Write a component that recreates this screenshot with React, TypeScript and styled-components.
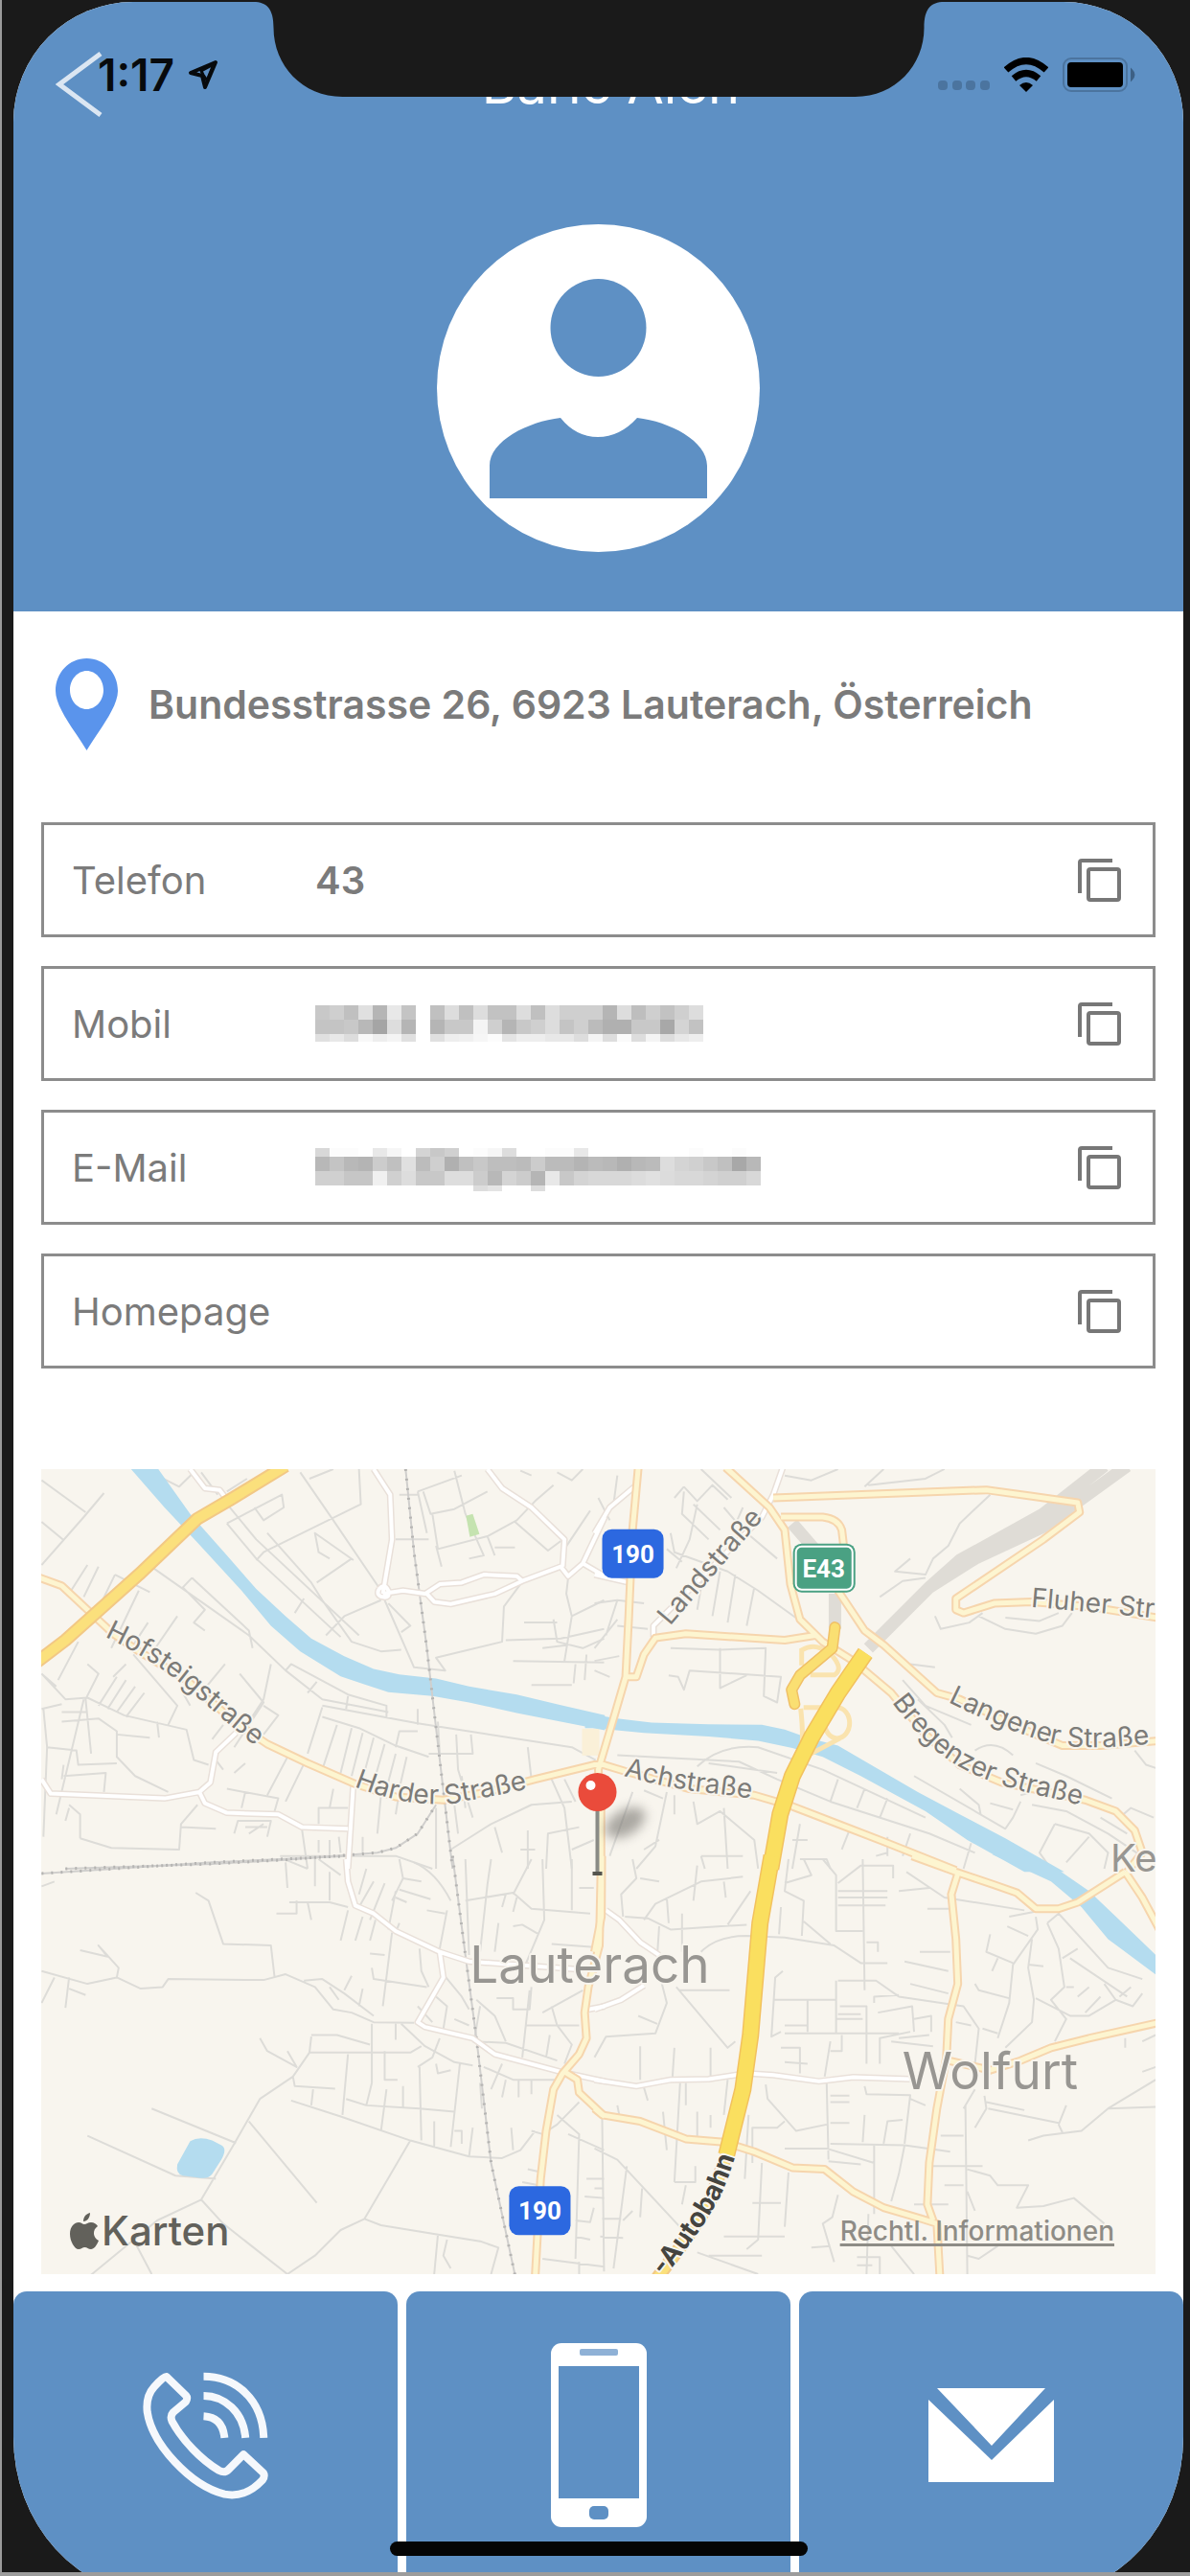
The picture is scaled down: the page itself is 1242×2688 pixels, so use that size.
import React from "react";
import styled, { createGlobalStyle } from "styled-components";

const blue = "#5e90c4";
const black = "#1a1a1a";
const grey = "#7b7b7b";
const uiFont = `Inter, Roboto, "Liberation Sans", sans-serif`;

const GlobalStyle = createGlobalStyle`
  *, *::before, *::after { box-sizing: border-box; }
  body { margin: 0; background: ${black}; font-family: ${uiFont}; }
  button, input { font: inherit; color: inherit; }
`;

const Device = styled.div`
  min-height: 100vh;
  overflow: hidden;
  padding: 2px 7px 0 12px;
  background: ${black};
  border-left: 2px solid #9a9a9a;
  border-bottom: 4px solid #9c9c9c;
`;

const Screen = styled.div`
  position: relative;
  display: flex;
  flex-direction: column;
  margin-bottom: -24px;
  overflow: hidden;
  background: #fff;
  border-radius: 125px 125px 150px 150px / 125px 125px 165px 165px;
`;

const Notch = styled.svg`
  position: absolute;
  top: 0;
  left: 50%;
  z-index: 2;
  transform: translateX(-50%);
`;

const StatusBar = styled.div`
  position: absolute;
  inset: 0 0 auto 0;
  z-index: 3;
  display: flex;
  align-items: center;
  justify-content: space-between;
  height: 152px;
  padding: 0 49px 0 88px;
  pointer-events: none;
`;

const StatusGroup = styled.div`
  display: flex;
  align-items: center;
  gap: 14px;
`;

const Time = styled.time`
  font-size: 46px;
  font-weight: 600;
  color: #070a0d;
`;

const Header = styled.header`
  display: flex;
  flex-direction: column;
  align-items: center;
  padding-bottom: 62px;
  background: ${blue};
`;

const NavBar = styled.div`
  display: grid;
  grid-template-columns: 1fr auto 1fr;
  align-items: center;
  align-self: stretch;
  height: 172px;
  padding: 0 44px;
  margin-bottom: 60px;
`;

const PlainButton = styled.button`
  display: flex;
  justify-self: start;
  padding: 0;
  background: none;
  border: 0;
  cursor: pointer;
`;

const Title = styled.h1`
  margin: 0;
  padding-left: 26px;
  font-size: 56px;
  font-weight: 400;
  color: #fff;
`;

const Content = styled.main`
  display: flex;
  flex-direction: column;
  padding: 49px 29px 18px;
`;

const Address = styled.address`
  display: flex;
  align-items: center;
  gap: 32px;
  padding-left: 15px;
  font-size: 41px;
  font-style: normal;
  font-weight: 600;
  color: ${grey};
  white-space: nowrap;
`;

const Fields = styled.div`
  display: grid;
  gap: 30px;
  margin: 75px 0 105px;
`;

const FieldBox = styled.div`
  display: grid;
  grid-template-columns: 254px 1fr auto;
  align-items: center;
  height: 120px;
  padding: 0 33px 0 29px;
  border: 3px solid #8c8c8c;
  font-size: 40px;
  color: ${grey};
`;

const ValueInput = styled.input`
  width: 100%;
  padding: 0;
  background: none;
  border: 0;
  outline: 0;
  font-weight: 600;
`;

const MapPanel = styled.section`
  position: relative;
  height: 840px;
  overflow: hidden;
  background: #f8f5ee;
`;

const MapDrawing = styled.svg`
  display: block;
  width: 100%;
  height: 100%;
`;

const MapFooter = styled.div`
  position: absolute;
  inset: auto 43px 20px 30px;
  display: flex;
  align-items: center;
  justify-content: space-between;
`;

const MapBrand = styled.span`
  display: flex;
  align-items: center;
  gap: 3px;
  font-size: 42px;
  font-weight: 500;
  color: #62615b;
`;

const LegalLink = styled.a`
  font-size: 28px;
  font-weight: 500;
  color: #8e8c86;
  text-decoration: underline;
  text-decoration-thickness: 3px;
  text-decoration-skip-ink: none;
  text-underline-offset: 3px;
`;

const Actions = styled.nav`
  display: grid;
  grid-template-columns: repeat(3, 1fr);
  gap: 9px;
`;

const ActionButton = styled.button`
  display: flex;
  align-items: center;
  justify-content: center;
  height: 317px;
  padding: 0 0 17px;
  background: ${blue};
  border: 0;
  border-radius: 14px 14px 0 0;
  cursor: pointer;
`;

const HomeIndicator = styled.div`
  position: absolute;
  bottom: 41px;
  left: 50%;
  width: 436px;
  height: 15px;
  background: #050505;
  border-radius: 8px;
  transform: translateX(-50%);
`;

/* ---------- pixelated values ---------- */

type Mosaic = { top: number; heights: number[]; rows: string[] };

const mobileMosaic: Mosaic = {
  top: 6,
  heights: [15, 15, 8],
  rows: [
    "c8cfc0e0b5e8c4ffc0ddc0ddc2c2ddc0ddcfcfcfb5ddbecfc2cfdd",
    "c4c4c8b8a5ddb5ffb5c8c8f4cfb5c8cfddc4cfbbb0b0c8c8a8d4c2",
    "e0e8ddf8eef4e0ffe0eef0f6fce4eeeee8e8ddf4ddfaddf4dde8ee",
  ],
};

const mailMosaic: Mosaic = {
  top: 5,
  heights: [9, 15, 15, 6],
  rows: [
    "d8fcfcffe8f6ffd4c8d0fffcf6ddfffffcfce8fffffffffffffffcfffffcff",
    "b8c4b8b4ccc0e0bccfb0c0c8bebebbccbbbbb4bbb8b0b8bbddd4d0c8c0a8b8",
    "d0d0c6c6f0d0ddc8c8ddddccb8d4ccb5e8c8d4d8d8d8dce0dcd8d8d4d0d0d8",
    "ffffffffffffffffffffffdde4ffffddffffffffffffffffffffffffffffff",
  ],
};

const cellWidth = 15;

function MosaicValue({ data, label }: { data: Mosaic; label: string }) {
  const columns = data.rows[0].length / 2;
  let y = data.top;
  return (
    <svg width={columns * cellWidth} height={50} role="img" aria-label={label} shapeRendering="crispEdges">
      {data.rows.map((row, r) => {
        const rowY = y;
        y += data.heights[r];
        return Array.from({ length: columns }, (_, c) => {
          const tone = row.slice(c * 2, c * 2 + 2);
          return tone === "ff" ? null : (
            <rect
              key={`${r}-${c}`}
              x={c * cellWidth}
              y={rowY}
              width={cellWidth}
              height={data.heights[r]}
              fill={`#${tone}${tone}${tone}`}
            />
          );
        });
      })}
    </svg>
  );
}

function CopyIcon() {
  return (
    <svg width="46" height="46" fill="none" stroke="#777" strokeWidth="4">
      <path d="M3 37V5a2 2 0 0 1 2-2h32" />
      <rect x="12" y="12" width="32" height="32" rx="2" />
    </svg>
  );
}

function Field({ id, label, value, mosaic }: { id: string; label: string; value?: string; mosaic?: Mosaic }) {
  return (
    <FieldBox>
      {mosaic ? <span>{label}</span> : <label htmlFor={id}>{label}</label>}
      {mosaic ? <MosaicValue data={mosaic} label={label} /> : <ValueInput id={id} readOnly value={value} />}
      <PlainButton type="button" aria-label={`${label} kopieren`}>
        <CopyIcon />
      </PlainButton>
    </FieldBox>
  );
}

/* ---------- map ---------- */

type Layer = "minor" | "rail" | "tunnel" | "water" | "white" | "local" | "ramp" | "major" | "motorway";
type Tile = { at: string } & Partial<Record<Layer, string>>;

const tiles: Tile[] = [
  {
    at: "translate(30 1520) scale(0.38265 0.33333)",
    water:
      "M350 35L440 180 540 310 620 415 700 500 770 570 860 625 940 665 1010 682 1110 695 1200 720 1330 745 1450 778 1570 810V857L1450 830 1330 803 1200 770 1100 750 980 738 920 715 850 688 740 610 660 530 580 420 460 270 370 160 275 35Z",
    major: "M20 645L100 575 300 370 460 195 550 135 700 30",
    local:
      "M30 380L90 405 160 480 230 555 300 610 430 700 560 830 650 900 760 960 890 1025 1000 1065 1130 1075 1250 1050 1380 1010 1540 965H1570",
    white:
      "M440 40L480 100 520 105 540 135M940 40L985 120 990 260 965 430 M965 430L1020 420 1080 430 1120 400 1180 395 1240 370 1330 375 1345 390 1270 430 1150 462 1105 455 1085 430M955 415q15 -20 25 5q5 25 -15 20q-20 -5 -10 -25M1345 390L1450 345 1470 375 1510 335 1570 190M1250 40L1290 100 1370 160 1460 260 1455 345M1510 335L1570 375M565 865L510 925 495 1020 465 1050 370 1070 60 1055 35 1010M465 1050L480 1085 540 1115 680 1120 745 1160 870 1165M885 1020L870 1290",
    rail: "M1027 40L1050 300 1085 600 1110 850 1155 1290M100 1290L500 1275 700 1262 950 1240 1000 1225 1060 1180 1110 1090",
    minor: `M35 75L155 175M205 115L150 190 35 340M35 205L95 262M350 60L410 95 450 50M470 50L515 120M530 135L620 260 900 560M595 70L540 110M740 50L830 200 960 420M765 70L830 40M900 40L905 150 640 300 620 325M540 210L690 120 695 160 640 200 615 160M540 210L620 320 850 565M880 320L785 395M885 325L780 240 790 300 820 320M960 450L860 500 810 560M970 450L1050 660 1135 670 1110 630 1290 580 1295 470 1340 400M980 460L1040 530 1015 550M650 240L770 395 800 450 880 580 960 610 1015 605M750 445L725 490M340 350L600 560 700 670 800 760 980 800M445 380L420 410 480 480 450 520 480 545M445 380L600 545 610 600M1060 110L1180 60M1075 110L1095 180 1160 165 1250 110M1160 45L1190 180 1240 310 1200 320M1100 180L1115 290 1250 250 1330 200 1380 140 1430 90M1010 120H1060M1000 260H1090M1060 110L1085 240M1325 205L1415 295 1450 265M1370 60L1340 45M1250 250L1270 310M1270 285H1325M1110 280L1125 345M1440 50L1480 75 1510 40M1530 170L1460 290M1470 380L1465 430 1480 500 1460 640M1480 500L1568 450M1300 575L1450 570 1568 540M1350 520H1440M1430 510L1440 580 1510 600 1568 570M1320 640L1568 645M1490 650L1485 710M1520 620L1515 700M1370 715H1480M1400 600L1470 590M75 720L35 680M75 1120L150 760 M135 580L80 700M300 420L225 600M160 340L110 430M190 345L150 440M235 370L330 425M235 370L180 500M325 520L285 590M405 500L345 600M265 650L230 690M285 620L405 780 380 840M35 680L100 760 160 755 260 810 430 855 450 950 490 965M160 650L190 680 155 760 170 930M190 780L240 690M215 790L265 700M240 800L290 720M265 815L315 740M90 800H160M90 830L190 820 240 860 240 940 290 1000 380 1050M240 870L330 880M35 790L90 775M40 790L50 910 40 1190M50 910L130 920 135 965 240 960M95 1000L210 990 205 1050M95 965L90 1010M350 830L355 880M535 650L470 740M575 680L640 770 560 910M660 650L640 760 600 830M640 780L680 810 640 870M440 780L420 740M530 840L500 885M700 670L715 650 870 745 975 780V820M785 705L760 740M870 750L865 790M800 785L760 930M800 780L1060 835 1480 910 1545 950M800 815L900 850 1000 905 1090 940M840 840L800 980M880 850L850 990M910 865L880 1000M940 880L910 1010M970 900L940 1020M1000 930L975 1040M1030 940L1010 1040M1000 910L1010 860 1060 860M1060 790V840M1090 930H1210L1205 870M1165 870L1170 980 1210 1130M1115 830L1120 930M1360 910L1370 1010M755 950L700 1080M710 930L650 1060M590 960L560 990M510 950L530 980M540 1040L680 1070 670 1110M590 1050L580 1100M790 1150V1100H870M830 1040L820 1100M140 1195L225 1225 410 1230 415 1150 460 1090M415 1160L510 1165M140 1195V1120L110 1090M100 1140L110 1100M560 1180L570 1140 660 1140 650 1190M590 1160H650M600 1180L640 1150M745 1170L760 1290M790 1240V1200M820 1250V1200M850 1240L845 1190M685 1250H1000L1100 1290M700 1262L760 1290M910 1190V1240M960 1060L950 1180M1010 1050L1000 1120M1110 1100V1290M1180 1000L1190 1100 M1150 1230L1260 1150 1370 1090 1480 1080M1270 1160L1290 1240M1360 1170V1290M1340 1230H1380M1410 1290L1415 1180 1500 1160M1425 1010L1460 1100 1480 1290M1460 1010L1490 1080M1540 1200L1480 1230M1160 1090L1170 1180`,
  },
  {
    at: "translate(620 1520) scale(0.3967 0.33333)",
    water:
      "M-25 800L0 808 60 820 150 833 300 838 440 840 500 855 560 880 640 905 720 960 850 1050 960 1120 1080 1195 1235 1300H1130L980 1200 870 1110 700 1000 600 940 520 912 430 890 300 876 130 865 0 850-25 850Z",
    tunnel: "M1400 30L1180 220 1000 320 880 410 720 600M1340 30L1180 180 960 325 880 410M632 540V430M520 210L600 320",
    motorway: "M712 615L640 740 570 880 520 1000 488 1120 463 1290",
    ramp: "M632 535L625 600 540 685 518 730 526 775",
    local:
      "M115 35L100 230 90 500 82 690 50 820 20 940 10 980 17 1100V1290M10 960L80 985 250 1040 420 1060 520 1095 640 1150 760 1205 950 1295M345 35L460 160 500 230 515 400 540 510 600 580 680 640 780 740 870 870 960 965 1070 1020 1290 1075 1370 1110 1420 1170 1440 1240 1400 1300M470 130L1030 105 1150 125 1270 145 1275 175 1180 260 950 445V480L970 490 1050 460 1150 455 1300 470 1480 505M490 190H600Q640 195 650 230L655 280M640 420L710 545 760 590 900 740 960 760 1100 840 1230 905 1330 905 1480 890M85 690H110L130 620 160 568 240 555 500 575 580 560",
    white: "M105 95L40 160 0 240M0 370L90 395M155 565V530L440 190 470 120 495 35",
    minor: `M60 60L50 150M10 130L40 200M280 40L360 130M235 95L210 130M235 95L270 140 310 90 350 135M235 110L230 180 300 260M270 150L250 260 215 350M260 150L330 230M200 240L210 300 350 360 430 420 570 540M340 160L390 230 480 320M390 160L375 200M330 360L310 500M370 370L350 520M420 410L400 530M290 340L270 480M230 330L190 290M500 60L570 75 640 40M710 95L760 40M720 90L870 70 920 40M1040 120L960 210 930 280 890 320 870 370 790 360 830 320M870 380L810 390 750 440M895 500L910 540 985 520 1020 490M1010 500L1080 540 1160 555 1230 530 1255 490M1080 505L1170 515 1220 490M200 600L330 605 450 600 445 750 480 770 490 690 250 670 235 730 220 690 195 685M330 600V725L400 685M810 700L870 780 990 840M850 760L920 840 940 880M830 650L895 660M1000 920Q1050 880 1100 935M1160 960L1240 1000 1360 1070M960 1040L1010 1090 1015 1120M840 1000L1080 1165 1100 1130 1120 1080M1040 1085L1100 1105M1120 1060L1180 1040M1150 1090L1240 1110 1350 1180 1475 1280M1210 1150L1170 1240 1200 1290M1210 1150L1300 1180 1350 1240 1340 1290M1240 1270L1300 1190M1330 1130L1400 1180M1380 1130L1410 1100 1470 1130M1420 920L1450 965 1475 975M0 460L60 450 130 460M0 600L60 510M0 640L65 625M0 670L40 690M60 450L30 560M60 530L140 540M60 935L380 955 480 1010 620 1080 880 1180 1000 1240M270 970Q330 900 430 910L600 980 870 1130M300 960L480 990M640 1010L620 1080M710 1040L690 1100M770 1070L750 1130M830 1180L810 1250M990 1210L970 1290M670 1170L650 1230M540 1150L520 1290M770 1190V1250M520 1200H560M190 1050L160 1220 110 1290M210 1060V1120M100 1050L40 1250M170 1200L130 1230M260 1080L270 1150 330 1110 390 1170 420 1200 430 1290M340 1100L350 1290M280 1250H390M280 1250L290 1290M130 1045L180 1070M540 1260H610L620 1290M740 1250L770 1240`,
  },
  {
    at: "translate(30 1940) scale(0.38265 0.33333)",
    water:
      "M440 882Q465 865 500 880L525 895Q542 905 525 940L500 985Q490 1002 460 996L420 990Q400 985 405 955Z",
    rail: "M1155 -10L1190 300 1220 560 1260 950 1325 1300M35 45L500 10 870 -10",
    white:
      "M865 0L870 70 890 145 940 170 1000 225 1120 290 1200 320 1500 345M1120 290L1130 370 1060 510 1080 525 1210 560 1270 610 1450 665 1570 695M1525 470L1570 460",
    local:
      "M1560 0L1555 270 1525 400 1515 480 1520 560 1500 610 1455 670 1430 720 1410 850 1395 1000 1380 1310M1460 665L1495 690 1500 730 1570 805",
    minor: `M35 85L70 70M455 105L490 130 530 265 660 270 670 370M140 285L215 305 190 270 245 340 240 370 160 390 35 350M240 370L305 405 365 400 380 375 640 378 700 360 780 400 830 470 880 480 940 510 1050 512M70 370L35 450M110 370L100 465M110 405L155 425M750 380L800 375 860 420 940 490M820 400L845 440M880 365L860 410M910 405L900 460M630 560L650 600 730 650 705 600M935 515V700M770 550H840L930 580M770 555L765 605 720 680 630 750 560 890 470 1065 350 1130 170 1300M765 605H1040L1070 585M720 680L725 710 835 718M600 820L785 1075M335 780L565 888M160 865L400 990 510 1000M470 1065L530 1140 705 1298 780 1240 850 1160 915 1125 1040 880M915 1125L960 1145 1120 1175 1230 1195 1280 1215 1260 1298M1115 1175L1105 1298M1140 1190L1130 1240 1150 1280M290 1200L335 1298M715 755L850 805 1040 880 1200 930 1290 935 1340 910 1380 850M775 720L770 770M870 610L855 800M865 750L920 770 1065 780 1160 790M970 600V690H1005M935 700L920 770M975 720L960 850M1020 710V780M1065 650L1070 880M1105 820V900M1060 650L1100 620 1120 560M1175 640L1150 900M1015 515L1080 585 1160 635 1210 645M1000 510V565M700 10L705 90M780 0V85M790 0L850 50M820 40V130M710 135H820L870 150M675 170H730V130M760 135L770 190M920 30L900 110M940 70L900 150M970 75L930 190M870 160L850 255M910 180L890 255M945 190L930 255M990 230L965 460M930 295L970 300M935 340L940 375 1085 400M1065 280L1070 350 1090 400M1000 100L980 220M1010 0L1020 60 990 130M1020 60L1070 70M1010 95L1095 125M1000 120L1030 135M1050 10Q1110 40 1150 130M1190 0L1200 300 M1190 130L1320 105 1370 155 1530 170M1260 0L1250 80 1230 290M1280 200L1270 290M1320 110L1370 0M1400 0L1405 190 1350 340M1300 110L1290 150M1330 120L1320 165M1480 0V160M1500 90H1540M1320 210L1345 205 1390 235M1425 265L1540 275M1140 160L1120 280M1085 160L1135 170M1130 360L1180 430 1200 470M1110 430L1140 460 1130 530M1160 500L1200 520M1060 460L1100 510M1220 440L1270 490 1300 570M1230 460L1215 560M1275 435H1320V470H1365L1370 400M1400 480L1510 410M1425 460L1440 520 1480 580 1460 640M1355 520H1500M1365 410L1345 620M1210 570L1300 575 1440 630M1240 650L1320 690H1440M1290 640L1260 720M1300 690L1290 745M1335 690V745M1370 690V735M1200 930L1210 840M1315 840L1320 910M1370 850L1400 860 1440 830 1500 760M1440 800L1500 860 1490 1250M1470 860L1568 910M1360 970L1400 980M1345 1010L1390 1020M1490 1180L1530 1190M1400 1250L1568 1275M1500 1260V1298M1520 1000L1568 1000M1515 1055L1568 1060M1490 1130L1530 1135 1540 1090M1230 700L1235 780M1110 640L1115 670 1150 660M1010 200L1000 230M1160 850H1180V890M1420 550L1410 620`,
  },
  {
    at: "translate(620 1940) scale(0.3967 0.33333)",
    water: "M1125 -15L1215 30 1300 100 1380 190 1480 305V365L1350 250 1280 150 1200 70 1045 -15Z",
    motorway: "M466 -10L435 200 410 550 390 720 347 925",
    major: "M347 925L300 1080 240 1190 165 1310",
    local:
      "M19 -10L18 180 0 290M835 -10L950 40 1050 80 1110 105 1160 155H1220L1270 135 1395 40M1395 40L1440 120 1485 220M0 780L20 800 120 820 240 875 340 885 420 915 520 965 605 970 680 1040 760 1090 860 1125 900 1140 908 1310M955 45L938 110 950 250 955 390 930 500 925 620 900 780 880 950 875 1080 890 1130M930 630L1040 660 1120 630 1200 590 1300 560 1480 512",
    white: "M30 160L65 190 120 260 170 300M0 470L70 440 130 395M0 690L110 710 200 690 300 688 400 670 470 675 590 695 680 682 830 688",
    minor: `M100 0L110 60 70 110 75 180M120 60L170 70M130 190L160 140 280 70 390 55M270 20L260 130M340 70L345 120M80 180L140 185 200 220 400 205M190 120L195 200M230 170V290M410 100L350 205M170 210L165 300M280 290Q320 240 400 240L500 245 630 270 700 325H770M510 0L500 100 550 130 545 240M550 0L570 50 500 75M600 0L635 50V225H705M490 150L485 235M550 195L620 265M705 0L710 410M640 100H770M640 120H770M640 145H765M640 75L700 20H785V60M715 260H745V290M820 40L920 120 1130 160M800 100L880 90M875 155H935M855 290H935M815 320L930 350M830 390L930 420M175 380L190 450 160 545 30 555 0 620M215 400L350 590 370 570M220 410H355M115 490L165 515M495 350L475 370 465 555 490 540M470 440H635M560 440V540M635 380V545M640 380H740L800 430 970 460 1010 530 1000 640M645 460H715V640M500 545H800M500 520H560M640 485H700M635 500H705M735 450V430L800 425M745 480L835 460 840 540M840 500L885 490V540M750 640V560L830 540M780 570L890 585M800 560L880 550M650 550V600H620M620 570L605 680M490 590H540V670M500 635L560 640M610 690L615 940M450 705L455 750 530 850 610 830M710 710L715 735 830 738L815 890M620 740H670M620 760H670M620 825H670M710 800L705 885M760 890L770 820 810 815M620 890L815 895 935 915M500 905H610L735 950M735 895V1110M815 895L800 985 780 1070M615 945L700 955M120 585V690M210 590L205 680M305 590V680M130 715L140 755M225 700L210 1010M240 700V770M350 690L340 800M270 790V880M180 790L190 910M415 950V840H480L500 820M405 800L395 1000M305 800V840M60 770L65 800M20 800L25 1290M0 905L60 940 240 1170M85 960L50 1280M125 1030L120 1120M0 1030H25M20 1125H70M15 1180L75 1185M75 1130L100 1100M240 1020L230 1080M210 1010H265V960M510 980L500 1150M440 950L430 1190 400 1220M415 1075H490M340 1180H500M270 1230L430 1298M300 1240L440 1240M640 1050L625 1120 600 1140 630 1260M780 1210L840 1298M690 1245H750V1298M690 1270H730M720 1110L715 1298M570 1215L620 1210M975 770L980 1298M980 1040L1000 1100M980 1240L1010 1250 1060 1210M890 960H1020M920 1020H970M840 1080H930M910 865H970M830 750L870 770M970 780L1000 720M1000 840L1030 780 1025 740M1030 760L1130 785M1035 780L1220 825M1240 770L1220 830M1220 830L1230 855M1140 880L1180 865 1280 850 1350 780 1475 690M1350 780L1475 775M1440 665L1475 650M980 970L1040 990 1060 1020H1140L1110 1090 1180 1085 1260 1060 1340 1140M1260 1060L1290 1090M1160 180L1165 220 1100 330 1090 450 1060 560M1085 210L1140 240M1090 180L1155 165M1190 200L1220 170 1350 340 1440 375M1190 200L1220 280 1235 400 1200 440 1240 500 1210 570M1140 330L1180 335M1150 250L1140 340 1155 440 1150 510 1080 590M1040 235L1030 290 1100 325M1060 310L1045 350M1230 310L1270 280M1250 310L1400 430M1240 400L1260 400M1300 400L1270 430M1340 390L1370 440 1415 460 1440 420M1380 430L1410 400M1370 440L1300 490H1250L1160 435M1000 390L1010 410 1090 435M950 510L990 520M1020 530L1060 545M1395 560V590M1440 570L1475 550M1330 430L1290 480`,
  },
];

const casing: [Layer, string, number][] = [
  ["minor", "#dddcd8", 2],
  ["tunnel", "#dfdcd6", 13],
];

const roads: [Layer, string, number, string, number][] = [
  ["white", "#e9e0d9", 7, "#ffffff", 4],
  ["local", "#f6d5ad", 9, "#fdf5d0", 5],
  ["major", "#f2c885", 14, "#fbe07c", 10],
  ["motorway", "#f2c15e", 18, "#fadf5f", 15],
  ["ramp", "#f0c067", 12, "#fadf72", 9],
];

function Strokes({ layer, color, width, dash }: { layer: Layer; color: string; width: number; dash?: string }) {
  return (
    <g fill="none" stroke={color} strokeWidth={width} strokeLinejoin="round" strokeDasharray={dash}>
      {tiles.map((tile) =>
        tile[layer] ? (
          <path key={tile.at} transform={tile.at} d={tile[layer]} vectorEffect="non-scaling-stroke" />
        ) : null
      )}
    </g>
  );
}

const streets = [
  { id: "hofsteig", d: "M109 1708Q160 1732 195 1762T290 1842", name: "Hofsteigstraße" },
  { id: "harder", d: "M369 1864Q410 1880 441 1882T480 1880Q520 1874 580 1860", name: "Harder Straße" },
  { id: "land", d: "M699 1697Q745 1642 820 1558", name: "Landstraße" },
  { id: "ach", d: "M650 1853Q700 1867 740 1871T830 1886", name: "Achstraße" },
  { id: "langener", d: "M988 1776Q1056 1809 1096 1819T1230 1816", name: "Langener Straße" },
  { id: "bregenzer", d: "M930 1776Q965 1824 1001 1844T1096 1876L1180 1897", name: "Bregenzer Straße" },
  { id: "fluher", d: "M1075 1677Q1136 1682 1260 1694", name: "Fluher Str" },
];

const MapText = styled.text<{ $size: number; $weight?: number; $color?: string }>`
  font-family: ${uiFont};
  font-size: ${(p) => p.$size}px;
  font-weight: ${(p) => p.$weight ?? 400};
  fill: ${(p) => p.$color ?? "#7c7b78"};
  stroke: #f8f5ee;
  stroke-width: 4px;
  stroke-linejoin: round;
  paint-order: stroke;
`;

const ShieldText = styled.text`
  font-family: "Liberation Sans Narrow", Roboto, sans-serif;
  font-size: 26px;
  font-weight: 700;
  fill: #fff;
  text-anchor: middle;
`;

function TownMap() {
  return (
    <MapDrawing viewBox="43 1533 1162 840" preserveAspectRatio="xMidYMid slice" role="img" aria-label="Karte von Lauterach">
      <defs>
        <filter id="soft" x="-50%" y="-50%" width="200%" height="200%">
          <feGaussianBlur stdDeviation="6" />
        </filter>
        {streets.map((s) => (
          <path key={s.id} id={s.id} d={s.d} />
        ))}
        <path id="autobahn" d="M693 2376Q731 2328 748 2297T780 2200" />
      </defs>
      {casing.map(([layer, color, width]) => (
        <Strokes key={layer} layer={layer} color={color} width={width} />
      ))}
      <path d="M486 1582L493 1580 500 1601 490 1604Z" fill="#c5e3b0" />
      <path d="M607 1804h18v28h-18Z" fill="#faf0d8" />
      {tiles.map((tile) => (
        <path key={tile.at} transform={tile.at} d={tile.water} fill="#b4dcef" />
      ))}
      <Strokes layer="rail" color="#d0cfcd" width={2} />
      <Strokes layer="rail" color="#b5b4b2" width={3} dash="2 8" />
      <Strokes layer="white" color={roads[0][1]} width={roads[0][2]} />
      <Strokes layer="white" color={roads[0][3]} width={roads[0][4]} />
      <g fill="none" stroke="#fae3ae" strokeWidth="5">
        <ellipse cx="873" cy="1798" rx="13" ry="16" />
        <path d="M838 1782h28M835 1783Q838 1810 836 1825M876 1814L846 1830M836 1738V1722Q850 1714 862 1724M845 1748H870Q880 1742 868 1728" />
      </g>
      {roads.slice(1).map(([layer, edge, edgeWidth, fill, fillWidth]) => (
        <g key={layer} strokeLinecap={layer === "ramp" ? "round" : "butt"}>
          <Strokes layer={layer} color={edge} width={edgeWidth} />
          <Strokes layer={layer} color={fill} width={fillWidth} />
        </g>
      ))}
      {streets.map((s) => (
        <MapText key={s.id} $size={28}>
          <textPath href={`#${s.id}`}>{s.name}</textPath>
        </MapText>
      ))}
      <MapText $size={28} $weight={700} $color="#45443f">
        <textPath href="#autobahn">-Autobahn</textPath>
      </MapText>
      <MapText $size={53} $color="#989692" x="490" y="2069">Lauterach</MapText>
      <MapText $size={53} $color="#989692" x="941" y="2180">Wolfurt</MapText>
      <MapText $size={40} $color="#989692" x="1158" y="1953">Ke</MapText>
      <rect x="628" y="1596" width="64" height="51" rx="10" fill="#2c68e0" />
      <ShieldText x="660" y="1631">190</ShieldText>
      <rect x="531" y="2281" width="64" height="51" rx="10" fill="#2c68e0" />
      <ShieldText x="563" y="2316">190</ShieldText>
      <rect x="827" y="1611" width="65" height="51" rx="9" fill="#4aa183" />
      <rect x="830" y="1614" width="59" height="45" rx="6" fill="none" stroke="#fff" strokeWidth="2" />
      <ShieldText x="859" y="1646">E43</ShieldText>
      <ellipse cx="652" cy="1902" rx="23" ry="13" fill="#77756f" opacity="0.6" filter="url(#soft)" transform="rotate(-30 652 1902)" />
      <path d="M623 1888V1955" stroke="#8a8b86" strokeWidth="4" />
      <path d="M618 1955h10" stroke="#55554f" strokeWidth="4" />
      <circle cx="623" cy="1870" r="20" fill="#ea4b3b" />
      <circle cx="616" cy="1863" r="5" fill="#fff" />
    </MapDrawing>
  );
}

/* ---------- page ---------- */

export default function App() {
  return (
    <>
      <GlobalStyle />
      <Device>
        <Screen>
          <Notch width="721" height="99" viewBox="0 0 721 99" aria-hidden="true">
            <path d="M0 0H721C707 0 700 7 700 27C700 66 670 99 628 99H93C51 99 21 66 21 27C21 7 14 0 0 0Z" fill={black} />
          </Notch>
          <StatusBar>
            <StatusGroup>
              <Time>1:17</Time>
              <svg width="32" height="32" viewBox="0 0 32 32" fill="none" stroke="#070a0d" strokeWidth="4" strokeLinejoin="round">
                <path d="M29 3L3 14 15 17 18 29Z" />
                <path d="M27 5L14 12 16 16 20 22Z" strokeWidth="3" />
              </svg>
            </StatusGroup>
            <StatusGroup>
              <svg width="56" height="36" fill="#4b749f">
                <rect x="1" y="24" width="10" height="10" rx="4" />
                <rect x="16" y="24" width="10" height="10" rx="4" />
                <rect x="30" y="24" width="10" height="10" rx="4" />
                <rect x="45" y="24" width="10" height="10" rx="4" />
              </svg>
              <svg width="46" height="36" viewBox="0 0 46 36" fill="none" stroke="#000" strokeWidth="7">
                <path d="M2 13Q23 -6 44 13M10 22Q23 11 36 22" />
                <path d="M23 36L16 29Q23 23 30 29Z" fill="#000" stroke="none" />
              </svg>
              <svg width="78" height="36">
                <rect x="2" y="1" width="66" height="34" rx="8" fill="none" stroke="#4b749f" strokeWidth="2" />
                <rect x="6" y="5" width="58" height="26" rx="4" fill="#000" />
                <path d="M73 13q5 5 0 10Z" fill="#3d6085" stroke="#3d6085" strokeWidth="2" />
              </svg>
            </StatusGroup>
          </StatusBar>

          <Header>
            <NavBar>
              <PlainButton type="button" aria-label="Zurück">
                <svg width="50" height="68" fill="none" stroke="#dbe6f2" strokeWidth="5">
                  <path d="M47 2L4 34 47 66" />
                </svg>
              </PlainButton>
              <Title>Baric Alen</Title>
            </NavBar>
            <svg width="337" height="342" viewBox="0 0 337 342" role="img" aria-label="Profilbild">
              <ellipse cx="168.500" cy="171" rx="168.500" ry="171" fill="#fff" />
              <ellipse cx="168.500" cy="108" rx="50" ry="51" fill={blue} />
              <path d="M55 286V252C55 226 95 206 129 202Q145 222 168 222T209 202C243 206 282 226 282 252V286Z" fill={blue} />
            </svg>
          </Header>

          <Content>
            <Address>
              <svg width="65" height="96" viewBox="0 0 65 96" aria-hidden="true">
                <path fillRule="evenodd" fill="#5a94ec" d="M32.500 0C14 0 0 15 0 34C0 52 22 78 32.500 96C43 78 65 52 65 34C65 15 51 0 32.500 0ZM32.500 13C42 13 50 22 50 33S42 53 32.500 53 15 44 15 33 23 13 32.500 13Z" />
              </svg>
              Bundesstrasse 26, 6923 Lauterach, Österreich
            </Address>

            <Fields>
              <Field id="telefon" label="Telefon" value="43" />
              <Field id="mobil" label="Mobil" mosaic={mobileMosaic} />
              <Field id="email" label="E-Mail" mosaic={mailMosaic} />
              <Field id="homepage" label="Homepage" value="" />
            </Fields>

            <MapPanel>
              <TownMap />
              <MapFooter>
                <MapBrand>
                  <svg width="30" height="38" viewBox="0 0 30 38" fill="#62615b" aria-hidden="true">
                    <path d="M21 0C21 5 18 9 14 9C14 4 17 1 21 0ZM15 12C17 12 19 10 22 10C25 10 28 12 29 14C23 18 24 26 30 29C28 34 25 38 22 38C19 38 18 36 15.500 36S12 38 9 38C5 38 0 30 0 22C0 14 5 10 9 10C12 10 13 12 15 12Z" />
                  </svg>
                  Karten
                </MapBrand>
                <LegalLink href="#rechtliches">Rechtl. Informationen</LegalLink>
              </MapFooter>
            </MapPanel>
          </Content>

          <Actions aria-label="Kontaktaktionen">
            <ActionButton type="button" aria-label="Anrufen">
              <svg width="131" height="133" viewBox="375 313 330 400" preserveAspectRatio="none" fill="none" stroke="#f5f8fc" strokeWidth="8" strokeLinejoin="round">
                <path vectorEffect="non-scaling-stroke" d="M437 328Q430 326 405 360Q382 390 387 440C400 540 500 670 590 697C630 706 660 690 690 652Q697 640 692 630L640 572 600 620Q590 632 575 622C530 590 480 530 452 468Q446 452 455 440L488 407Q494 395 489 388Z" />
                <path vectorEffect="non-scaling-stroke" d="M535 327C620 327 690 400 693 520M535 388C590 388 640 440 645 520M535 452Q585 455 590 520" />
              </svg>
            </ActionButton>
            <ActionButton type="button" aria-label="Mobil anrufen">
              <svg width="100" height="192" viewBox="0 0 100 192">
                <rect width="100" height="192" rx="11" fill="#fff" />
                <rect x="8" y="24" width="84" height="138" fill={blue} />
                <rect x="30" y="6" width="40" height="7" rx="2" fill="#8fb1d6" />
                <rect x="40" y="170" width="20" height="14" rx="5" fill={blue} />
              </svg>
            </ActionButton>
            <ActionButton type="button" aria-label="E-Mail senden">
              <svg width="131" height="98" viewBox="0 0 131 98" fill="#fff">
                <path d="M9 0H122L66 60ZM0 12L66 75 131 12V98H0Z" />
              </svg>
            </ActionButton>
          </Actions>
          <HomeIndicator />
        </Screen>
      </Device>
    </>
  );
}
